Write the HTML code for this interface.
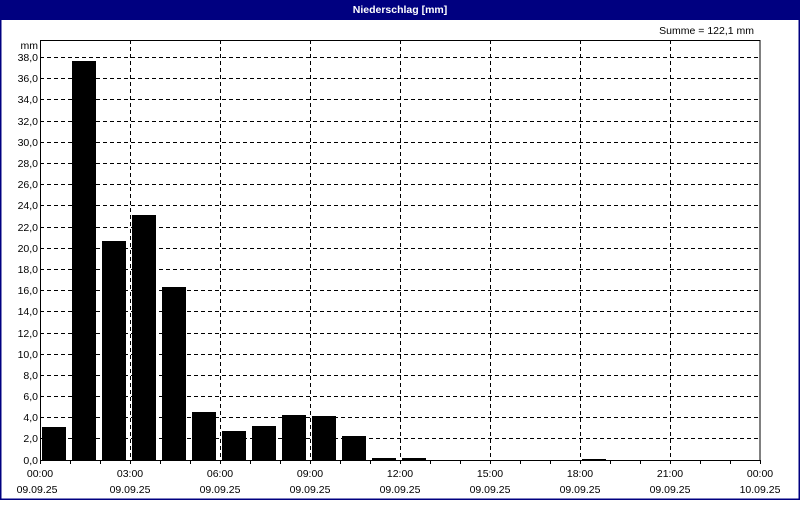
<!DOCTYPE html>
<html><head><style>
body{margin:0;width:800px;height:500px;overflow:hidden;background:#fff}
svg text{font-family:"Liberation Sans",sans-serif;font-size:10.5px;fill:#000}
</style></head><body>
<svg width="800" height="500" xmlns="http://www.w3.org/2000/svg">
<rect x="0" y="0" width="800" height="500" fill="#fff"/>
<rect x="0.5" y="0.5" width="799" height="499" fill="none" stroke="#000080" stroke-width="2"/>
<rect x="0" y="0" width="800" height="20" fill="#000080"/>
<text x="400" y="13" text-anchor="middle" style="fill:#fff;font-weight:bold">Niederschlag [mm]</text>
<text x="754" y="34" text-anchor="end">Summe = 122,1 mm</text>
<text x="38" y="49" text-anchor="end">mm</text>
<g stroke="#000" stroke-width="1" stroke-dasharray="4,3" fill="none">
<path d="M40 438.5H760M40 417.5H760M40 396.5H760M40 375.5H760M40 354.5H760M40 333.5H760M40 311.5H760M40 290.5H760M40 269.5H760M40 248.5H760M40 227.5H760M40 205.5H760M40 184.5H760M40 163.5H760M40 142.5H760M40 121.5H760M40 99.5H760M40 78.5H760M40 57.5H760"/>
<path d="M130.5 40V460M220.5 40V460M310.5 40V460M400.5 40V460M490.5 40V460M580.5 40V460M670.5 40V460"/>
</g>
<g fill="#000">
<rect x="42" y="427" width="24" height="33"/>
<rect x="72" y="61" width="24" height="399"/>
<rect x="102" y="241" width="24" height="219"/>
<rect x="132" y="215" width="24" height="245"/>
<rect x="162" y="287" width="24" height="173"/>
<rect x="192" y="412" width="24" height="48"/>
<rect x="222" y="431" width="24" height="29"/>
<rect x="252" y="426" width="24" height="34"/>
<rect x="282" y="415" width="24" height="45"/>
<rect x="312" y="416" width="24" height="44"/>
<rect x="342" y="436" width="24" height="24"/>
<rect x="372" y="458" width="24" height="2"/>
<rect x="402" y="458" width="24" height="2"/>
<rect x="582" y="459" width="24" height="1"/>
</g>
<rect x="40.5" y="40.5" width="719.5" height="420" fill="none" stroke="#000"/>
<path stroke="#000" d="M40.5 460V464M70.5 460V464M100.5 460V464M130.5 460V464M160.5 460V464M190.5 460V464M220.5 460V464M250.5 460V464M280.5 460V464M310.5 460V464M340.5 460V464M370.5 460V464M400.5 460V464M430.5 460V464M460.5 460V464M490.5 460V464M520.5 460V464M550.5 460V464M580.5 460V464M610.5 460V464M640.5 460V464M670.5 460V464M700.5 460V464M730.5 460V464M760.5 460V464"/>
<g text-anchor="end">
<text x="38" y="464">0,0</text><text x="38" y="442">2,0</text><text x="38" y="421">4,0</text><text x="38" y="400">6,0</text><text x="38" y="379">8,0</text><text x="38" y="358">10,0</text><text x="38" y="337">12,0</text><text x="38" y="315">14,0</text><text x="38" y="294">16,0</text><text x="38" y="273">18,0</text><text x="38" y="252">20,0</text><text x="38" y="231">22,0</text><text x="38" y="209">24,0</text><text x="38" y="188">26,0</text><text x="38" y="167">28,0</text><text x="38" y="146">30,0</text><text x="38" y="125">32,0</text><text x="38" y="103">34,0</text><text x="38" y="82">36,0</text><text x="38" y="61">38,0</text>
</g>
<g text-anchor="middle">
<text x="40" y="477">00:00</text><text x="130" y="477">03:00</text><text x="220" y="477">06:00</text><text x="310" y="477">09:00</text><text x="400" y="477">12:00</text><text x="490" y="477">15:00</text><text x="580" y="477">18:00</text><text x="670" y="477">21:00</text><text x="760" y="477">00:00</text>
<text x="37" y="493">09.09.25</text><text x="130" y="493">09.09.25</text><text x="220" y="493">09.09.25</text><text x="310" y="493">09.09.25</text><text x="400" y="493">09.09.25</text><text x="490" y="493">09.09.25</text><text x="580" y="493">09.09.25</text><text x="670" y="493">09.09.25</text><text x="760" y="493">10.09.25</text>
</g>
</svg>
</body></html>
